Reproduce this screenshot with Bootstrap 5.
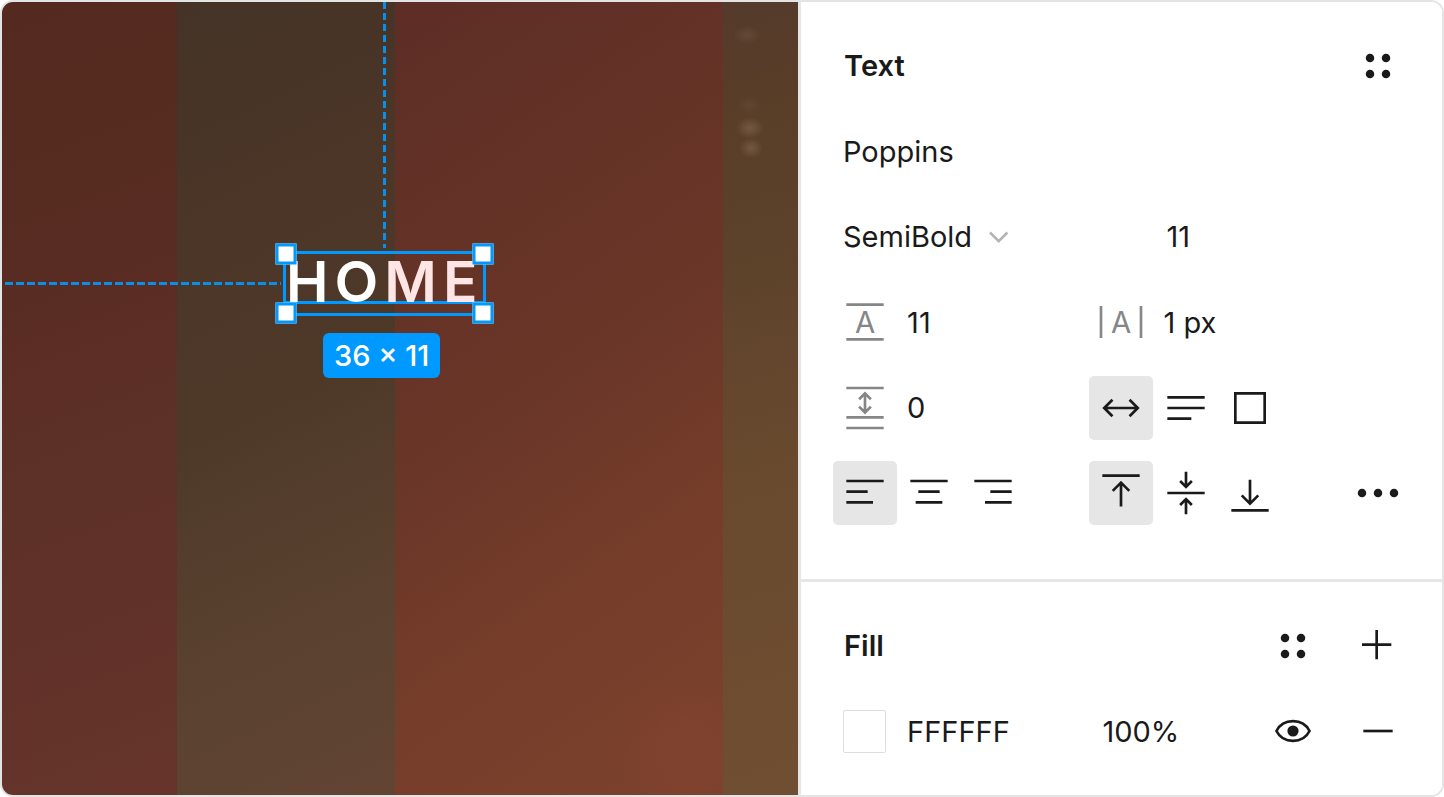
<!DOCTYPE html>
<html lang="en">
<head>
<meta charset="utf-8">
<meta name="viewport" content="width=device-width, initial-scale=1">
<title>Text properties</title>
<link href="https://cdn.jsdelivr.net/npm/bootstrap@5.3.0/dist/css/bootstrap.min.css" rel="stylesheet">
<style>
  :root { --ink: #1a1a1a; --line: #e6e6e6; --accent: #0099ff; --muted: #868686; }
  body { font-family: Inter, "Liberation Sans", sans-serif; font-size: 29px; line-height: 44px; color: var(--ink); background: #fff; }
  .editor { display: grid; grid-template-columns: 796fr 644fr; min-height: 100vh; border: 2px solid #e4e4e4; border-radius: 13px; overflow: hidden; }

  /* Canvas */
  .band-a { flex: 175; background: linear-gradient(160deg, #54291f 0%, #562b20 25%, #5b2d25 42%, #5d3028 60%, #66342b 100%); }
  .band-b { flex: 218; background: linear-gradient(155deg, #443327 0%, #4a3527 22%, #4e3929 50%, #5b4230 78%, #624433 100%); }
  .band-c { flex: 329; background: radial-gradient(circle at 88% 94%, rgba(140,70,50,.35), transparent 70px), linear-gradient(145deg, #5d2d26 0%, #643226 25%, #6a3628 48%, #753d2a 70%, #7c422d 100%); }
  .band-d { flex: 75; background:
    radial-gradient(ellipse 14px 11px at 27px 126px, rgba(130,99,76,.7), transparent),
    radial-gradient(ellipse 12px 10px at 28px 146px, rgba(130,99,76,.7), transparent),
    radial-gradient(ellipse 14px 9px at 24px 33px, rgba(108,78,62,.7), transparent),
    radial-gradient(ellipse 12px 9px at 26px 103px, rgba(104,74,60,.6), transparent),
    linear-gradient(165deg, #543b2a 0%, #593e28 15%, #5e432b 35%, #694a2f 60%, #704e31 100%); }
  .guide-v { left: 381px; top: 0; width: 3px; height: 246px; background: repeating-linear-gradient(to bottom, var(--accent) 0 7px, transparent 7px 11px); opacity: .9; }
  .guide-h { left: 3px; top: 280px; width: 276px; height: 3px; background: repeating-linear-gradient(to right, var(--accent) 0 8px, transparent 8px 11px); opacity: .9; }
  .selection { left: 281px; top: 249px; width: 203px; height: 65px; border: 3px solid var(--accent); }
  .sel-text { font-weight: 600; font-size: 57px; line-height: 56px; letter-spacing: 6px; color: #fff; border-bottom: 3px solid var(--accent); height: 50px; white-space: nowrap; }
  .sel-text span { color: #ffe5e5; }
  .handle { width: 21px; height: 21px; background: #fff; border: 3px solid var(--accent); }
  .size-tag { left: 321px; top: 331px; padding: 1px 11px 0; line-height: 44px; border-radius: 6px; background: var(--accent); color: #fff; font-weight: 500; white-space: nowrap; }

  /* Inspector */
  .inspector { border-left: 3px solid var(--line); }
  .section { padding: 21px 32px; }
  .section + .section { border-top: 3px solid var(--line); }
  .prop-grid { display: grid; grid-template-columns: repeat(9, minmax(0, 1fr)); grid-auto-rows: 1fr; align-items: center; }
  .text-grid { min-height: 513px; }
  .section:first-child { padding-bottom: 43px; }
  .fill-grid { min-height: 171px; }
  .span-2 { grid-column: span 2; }
  .span-3 { grid-column: span 3; }
  .span-4 { grid-column: span 4; }
  .from-1 { grid-column-start: 1; }
  .from-5 { grid-column-start: 5; }
  .from-6 { grid-column: 6 / -1; }
  .full-row { grid-column: 1 / -1; }
  .title { font-size: 29px; font-weight: 600; line-height: 44px; padding-left: 11px; }
  .field { width: 100%; min-width: 0; border: 0; background-color: transparent; color: var(--ink); padding: 1px 0 0 10px; font: inherit; line-height: 44px; outline-color: var(--accent); }
  .field.wide { padding-left: 13px; }
  select.field { width: 178px; appearance: none; background: url("data:image/svg+xml,%3Csvg xmlns='http://www.w3.org/2000/svg' width='20' height='12'%3E%3Cpath d='M1 1.5l8.7 8.7 8.7-8.7' fill='none' stroke='%23b3b3b3' stroke-width='2.5'/%3E%3C/svg%3E") no-repeat right 2px center; }
  .tool { display: block; width: 64px; height: 64px; padding: 0; border: 0; border-radius: 5px; background: transparent; color: var(--ink); line-height: 0; }
  .btn-check:checked + .tool { background: var(--line); }
  .tool svg, .glyph { display: block; width: 64px; height: 64px; fill: none; stroke: currentColor; stroke-width: 1; }
  .glyph { color: var(--muted); }
  .glyph text { fill: currentColor; stroke: none; font-size: 11px; text-anchor: middle; }
  svg .solid { fill: currentColor; stroke: none; }
  .swatch { width: 43px; height: 43px; margin-left: 10px; padding: 0; border: 1px solid #dedede; border-radius: 2px; background: #fff; }
  .actions { gap: 21px; }
</style>
</head>
<body>
<main class="editor">
  <section class="position-relative d-flex overflow-hidden" aria-label="Canvas">
    <div class="band-a"></div><div class="band-b"></div><div class="band-c"></div><div class="band-d"></div>
    <div class="guide-v position-absolute"></div>
    <div class="guide-h position-absolute"></div>
    <div class="selection position-absolute">
      <div class="sel-text">HO<span>ME</span></div>
      <div class="handle position-absolute top-0 start-0 translate-middle"></div>
      <div class="handle position-absolute top-0 start-100 translate-middle"></div>
      <div class="handle position-absolute top-100 start-0 translate-middle"></div>
      <div class="handle position-absolute top-100 start-100 translate-middle"></div>
    </div>
    <div class="size-tag position-absolute">36 × 11</div>
  </section>

  <aside class="inspector d-flex flex-column bg-white">
    <section class="section">
      <div class="prop-grid text-grid">
        <h2 class="title span-4 mb-0">Text</h2>
        <div class="from-6 d-flex justify-content-end">
          <button type="button" class="tool" aria-label="Text styles"><svg viewBox="0 0 24 24"><g class="solid"><circle cx="9" cy="9" r="1.6"/><circle cx="15" cy="9" r="1.6"/><circle cx="9" cy="15" r="1.6"/><circle cx="15" cy="15" r="1.6"/></g></svg></button>
        </div>

        <div class="full-row"><input class="field" type="text" value="Poppins" aria-label="Font family"></div>

        <div class="span-4"><select class="field" aria-label="Font weight"><option>SemiBold</option></select></div>
        <div class="from-6"><input class="field wide" type="text" value="11" aria-label="Font size"></div>

        <svg class="glyph from-1" viewBox="0 0 24 24" aria-hidden="true"><path d="M5 5.5h14M5 18.5h14"/><text x="12" y="16">A</text></svg>
        <div class="span-3"><input class="field" type="text" value="11" aria-label="Line height"></div>
        <svg class="glyph from-5" viewBox="0 0 24 24" aria-hidden="true"><path d="M4.5 6v12M19.5 6v12"/><text x="12" y="16">A</text></svg>
        <div class="span-4"><input class="field" type="text" value="1 px" aria-label="Letter spacing"></div>

        <svg class="glyph from-1" viewBox="0 0 24 24" aria-hidden="true"><path d="M5 4.5h14M5 15.5h14M5 19.5h14M12 6.6v7M9.8 8.7L12 6.5l2.2 2.2M9.8 11.5l2.2 2.2 2.2-2.2"/></svg>
        <div class="span-3"><input class="field" type="text" value="0" aria-label="Paragraph spacing"></div>
        <div>
          <input class="btn-check" type="radio" name="resize" id="rs-w" checked>
          <label class="tool" for="rs-w" aria-label="Auto width"><svg viewBox="0 0 24 24"><path d="M5.6 12h12.8M8.8 8.9L5.7 12l3.1 3.1M15.2 8.9l3.1 3.1-3.1 3.1"/></svg></label>
        </div>
        <div>
          <input class="btn-check" type="radio" name="resize" id="rs-h">
          <label class="tool" for="rs-h" aria-label="Auto height"><svg viewBox="0 0 24 24"><path d="M5 8h14M5 12h14M5 16h9"/></svg></label>
        </div>
        <div class="span-3">
          <input class="btn-check" type="radio" name="resize" id="rs-f">
          <label class="tool" for="rs-f" aria-label="Fixed size"><svg viewBox="0 0 24 24"><path d="M6.5 6.5h11v11h-11z"/></svg></label>
        </div>

        <div>
          <input class="btn-check" type="radio" name="halign" id="al-l" checked>
          <label class="tool" for="al-l" aria-label="Align left"><svg viewBox="0 0 24 24"><path d="M5 7.5h14M5 11.5h8M5 15.5h10"/></svg></label>
        </div>
        <div>
          <input class="btn-check" type="radio" name="halign" id="al-c">
          <label class="tool" for="al-c" aria-label="Align center"><svg viewBox="0 0 24 24"><path d="M5 7.5h14M8 11.5h8M7 15.5h10"/></svg></label>
        </div>
        <div class="span-2">
          <input class="btn-check" type="radio" name="halign" id="al-r">
          <label class="tool" for="al-r" aria-label="Align right"><svg viewBox="0 0 24 24"><path d="M5 7.5h14M11 11.5h8M9 15.5h10"/></svg></label>
        </div>
        <div>
          <input class="btn-check" type="radio" name="valign" id="va-t" checked>
          <label class="tool" for="va-t" aria-label="Align top"><svg viewBox="0 0 24 24"><path d="M5 5.5h14M12 17.1V8M8.9 11.2L12 8.1l3.1 3.1"/></svg></label>
        </div>
        <div>
          <input class="btn-check" type="radio" name="valign" id="va-m">
          <label class="tool" for="va-m" aria-label="Align middle"><svg viewBox="0 0 24 24"><path d="M5 12h14M12 4v5.6M9.8 7.5L12 9.7l2.2-2.2M12 20v-5.6M9.8 16.5l2.2-2.2 2.2 2.2"/></svg></label>
        </div>
        <div class="span-2">
          <input class="btn-check" type="radio" name="valign" id="va-b">
          <label class="tool" for="va-b" aria-label="Align bottom"><svg viewBox="0 0 24 24"><path d="M5 18.5h14M12 7v9M8.9 12.9L12 16l3.1-3.1"/></svg></label>
        </div>
        <button type="button" class="tool" aria-label="More type settings"><svg viewBox="0 0 24 24"><g class="solid"><circle cx="6" cy="12" r="1.6"/><circle cx="12" cy="12" r="1.6"/><circle cx="18" cy="12" r="1.6"/></g></svg></button>
      </div>
    </section>

    <section class="section">
      <div class="prop-grid fill-grid">
        <h2 class="title span-4 mb-0">Fill</h2>
        <div class="actions d-flex justify-content-end from-6">
          <button type="button" class="tool" aria-label="Color styles"><svg viewBox="0 0 24 24"><g class="solid"><circle cx="9" cy="9" r="1.6"/><circle cx="15" cy="9" r="1.6"/><circle cx="9" cy="15" r="1.6"/><circle cx="15" cy="15" r="1.6"/></g></svg></button>
          <button type="button" class="tool" aria-label="Add fill"><svg viewBox="0 0 24 24"><path d="M6 11.5h11M11.5 6v11"/></svg></button>
        </div>
        <button type="button" class="swatch" aria-label="Fill color"></button>
        <div class="span-3"><input class="field" type="text" value="FFFFFF" aria-label="Hex value"></div>
        <div class="span-2"><input class="field wide" type="text" value="100%" aria-label="Opacity"></div>
        <div class="actions d-flex justify-content-end span-3">
          <button type="button" class="tool" aria-label="Toggle visibility"><svg viewBox="0 0 24 24"><path d="M5.8 12C7 9.6 9.3 8.3 12 8.3s5 1.3 6.2 3.7c-1.2 2.4-3.5 3.7-6.2 3.7S7 14.4 5.8 12z"/><circle class="solid" cx="12" cy="12" r="2.1"/></svg></button>
          <button type="button" class="tool" aria-label="Remove fill"><svg viewBox="0 0 24 24"><path d="M6.5 12h11"/></svg></button>
        </div>
      </div>
    </section>
  </aside>
</main>
<script src="https://cdn.jsdelivr.net/npm/bootstrap@5.3.0/dist/js/bootstrap.bundle.min.js"></script>
</body>
</html>
